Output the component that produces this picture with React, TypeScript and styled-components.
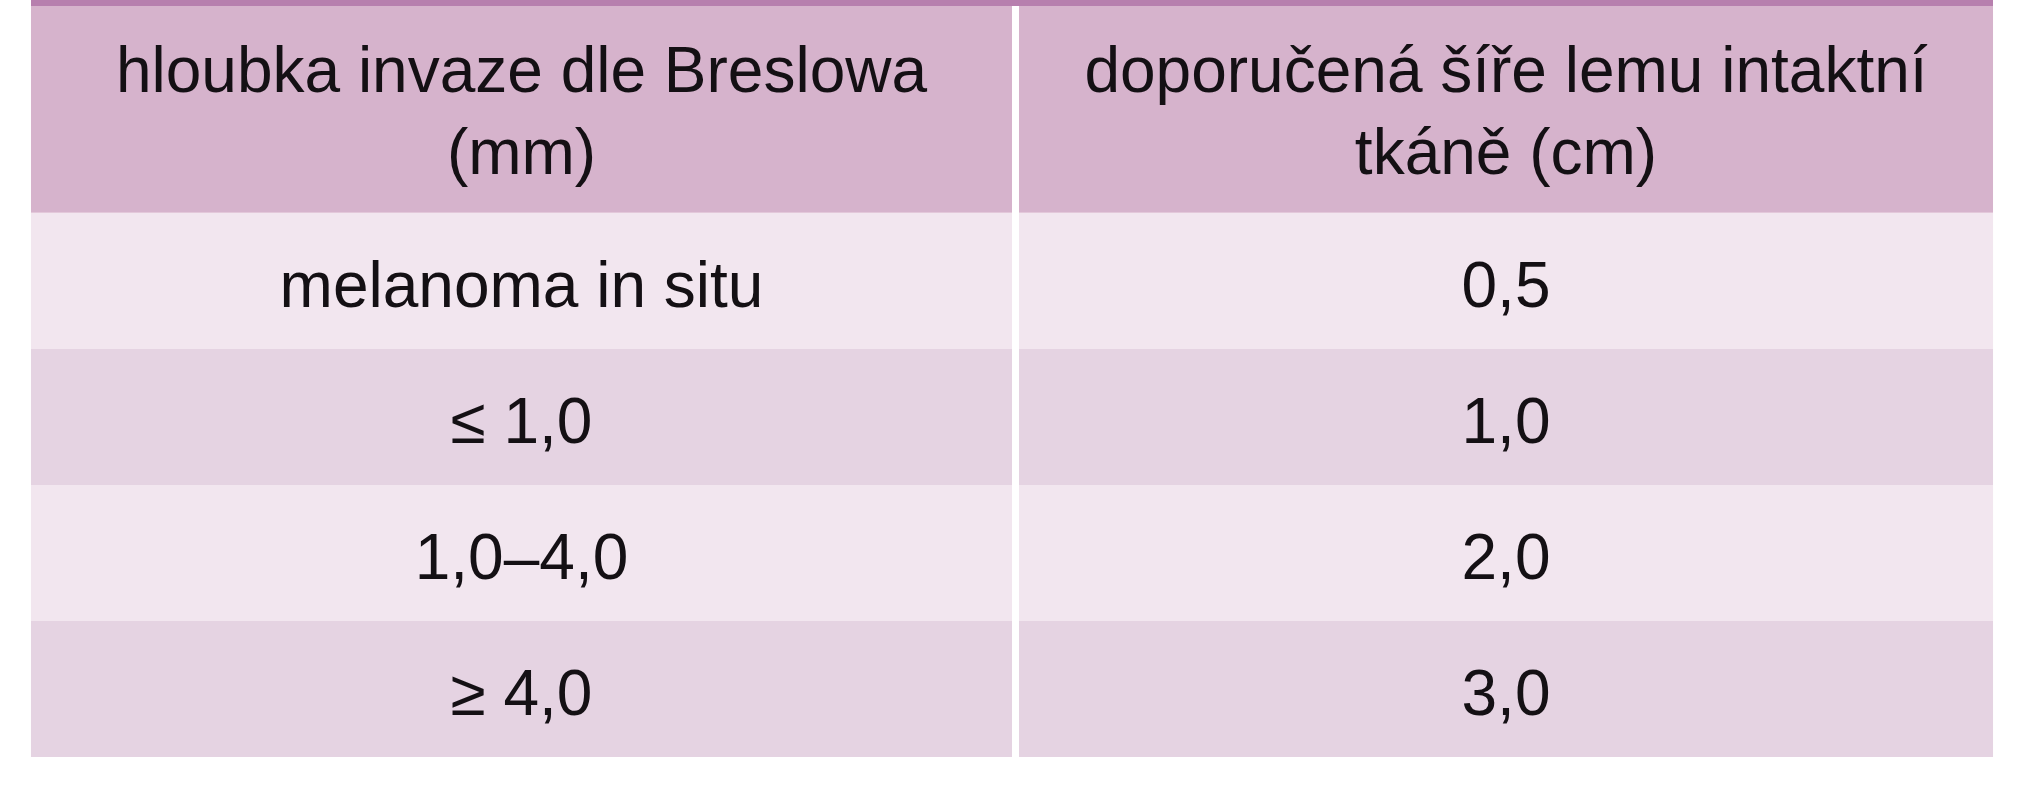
import styled, { createGlobalStyle } from 'styled-components';

const GlobalStyle = createGlobalStyle`
  html, body {
    margin: 0;
    padding: 0;
    background: #ffffff;
  }

  body {
    font-family: "Liberation Sans", Arial, sans-serif;
    color: #141014;
  }
`;

const Page = styled.div`
  padding: 0 32px 0 31px;
  width: 1962px;
`;

const Table = styled.div`
  display: grid;
  grid-template-columns: 981px 974px;
  column-gap: 7px;
  border-top: 6px solid #b77fae;
  box-shadow: 0 6px 6px -4px rgba(120, 80, 110, 0.08);
`;

const HeadCell = styled.div`
  background: #d6b3cc;
  height: 207px;
  display: flex;
  align-items: center;
  justify-content: center;
  text-align: center;
  font-size: 64px;
  line-height: 82px;
  padding: 4px 40px 0;
  box-sizing: border-box;
  border-bottom: 1px solid #e3c8da;
`;

const Cell = styled.div<{ $shade: 'light' | 'dark' }>`
  background: ${p => (p.$shade === 'light' ? '#f2e6ef' : '#e5d3e2')};
  height: 136px;
  display: flex;
  align-items: center;
  justify-content: center;
  font-size: 64px;
  line-height: 74px;
  padding-top: 8px;
  box-sizing: border-box;
`;

const rows = [
  { depth: 'melanoma in situ', margin: '0,5' },
  { depth: '≤ 1,0', margin: '1,0' },
  { depth: '1,0–4,0', margin: '2,0' },
  { depth: '≥ 4,0', margin: '3,0' },
];

export default function App() {
  return (
    <>
      <GlobalStyle />
      <Page>
        <Table>
          <HeadCell>
            hloubka invaze dle Breslowa
            <br />
            (mm)
          </HeadCell>
          <HeadCell>
            doporučená šíře lemu intaktní
            <br />
            tkáně (cm)
          </HeadCell>
          {rows.map((r, i) => {
            const shade = i % 2 === 0 ? 'light' : 'dark';
            return [
              <Cell key={`d${i}`} $shade={shade}>{r.depth}</Cell>,
              <Cell key={`m${i}`} $shade={shade}>{r.margin}</Cell>,
            ];
          })}
        </Table>
      </Page>
    </>
  );
}
